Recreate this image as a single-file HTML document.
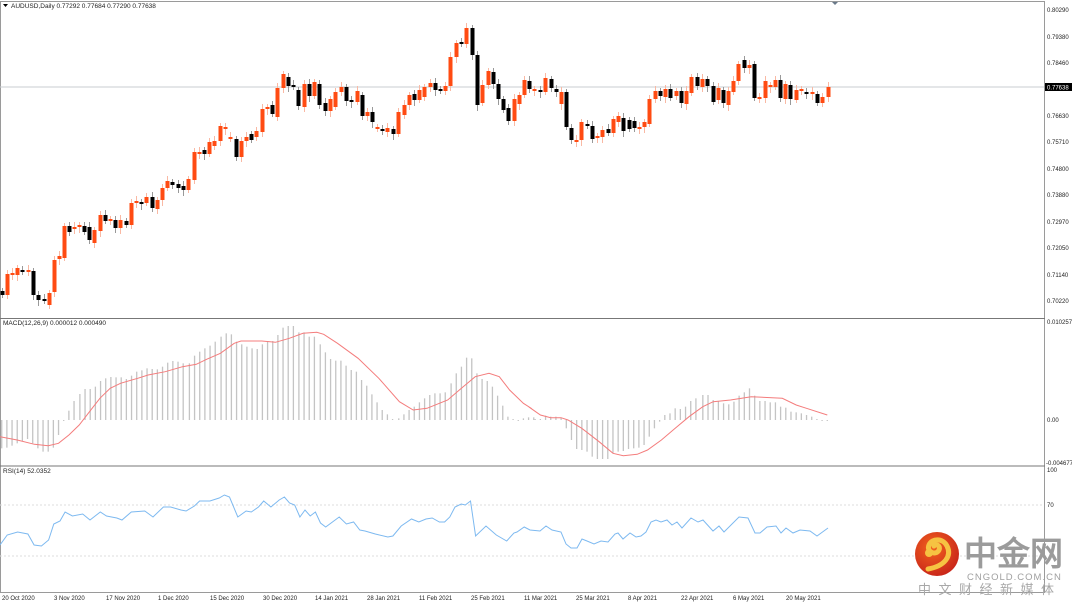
<!DOCTYPE html><html><head><meta charset="utf-8"><style>
html,body{margin:0;padding:0;background:#fff;}
body{width:1072px;height:604px;overflow:hidden;position:relative;font-family:"Liberation Sans",sans-serif;}
svg text{font-family:"Liberation Sans",sans-serif;}
</style></head><body>
<svg id="s" width="1072" height="604" viewBox="0 0 1072 604" xmlns="http://www.w3.org/2000/svg">
<rect x="0" y="0" width="1072" height="604" fill="#fff"/>
<g stroke="#9a9a9a" stroke-width="1" fill="none">
<line x1="0" y1="1.5" x2="1045" y2="1.5"/>
<line x1="0.5" y1="1" x2="0.5" y2="593"/>
<line x1="1044.5" y1="1" x2="1044.5" y2="593"/>
<line x1="0" y1="318.5" x2="1045" y2="318.5" stroke="#777"/>
<line x1="0" y1="466" x2="1045" y2="466" stroke="#777"/>
<line x1="0" y1="592.5" x2="1045" y2="592.5"/>
</g>
<line x1="0" y1="87" x2="1044" y2="87" stroke="#c8ccd2" stroke-width="1"/>
<line x1="0" y1="505" x2="1044" y2="505" stroke="#ddd" stroke-dasharray="2,2"/>
<line x1="0" y1="556" x2="1044" y2="556" stroke="#ddd" stroke-dasharray="2,2"/>
<polygon points="832,2 838,2 835,5" fill="#6a7a8a"/>
<polygon points="3,4 8,4 5.5,7" fill="#000"/>
<text x="11" y="8" font-size="6.5" fill="#222">AUDUSD,Daily  0.77292 0.77684 0.77290 0.77638</text>
<text x="3" y="325" font-size="6.5" fill="#222">MACD(12,26,9) 0.000012 0.000490</text>
<text x="3" y="473" font-size="6.5" fill="#222">RSI(14) 52.0352</text>
<g id="cd"></g>
<g id="mh" stroke="#c4c4c4" stroke-width="1.3"></g>
<polyline id="ms" fill="none" stroke="#f47c7c" stroke-width="1"/>
<polyline id="rs" fill="none" stroke="#7db9f0" stroke-width="1"/>
<g font-size="6" fill="#222">
<text x="1047" y="12">0.80290</text><text x="1047" y="39">0.79380</text><text x="1047" y="65">0.78460</text>
<rect x="1045" y="83" width="27" height="8" fill="#000"/><text x="1047" y="89.5" fill="#fff">0.77638</text>
<text x="1047" y="118">0.76630</text><text x="1047" y="144">0.75710</text><text x="1047" y="171">0.74800</text>
<text x="1047" y="197">0.73880</text><text x="1047" y="224">0.72970</text><text x="1047" y="250">0.72050</text>
<text x="1047" y="277">0.71140</text><text x="1047" y="303">0.70220</text>
<text x="1047" y="324">0.010257</text><text x="1047" y="422">0.00</text><text x="1046" y="465">-0.004677</text>
<text x="1047" y="472">100</text><text x="1047" y="507">70</text>
</g>
<g font-size="6" fill="#222">
<text x="2" y="600">20 Oct 2020</text><text x="54" y="600">3 Nov 2020</text><text x="106" y="600">17 Nov 2020</text>
<text x="158" y="600">1 Dec 2020</text><text x="210" y="600">15 Dec 2020</text><text x="263" y="600">30 Dec 2020</text>
<text x="315" y="600">14 Jan 2021</text><text x="367" y="600">28 Jan 2021</text><text x="419" y="600">11 Feb 2021</text>
<text x="471" y="600">25 Feb 2021</text><text x="524" y="600">11 Mar 2021</text><text x="576" y="600">25 Mar 2021</text>
<text x="628" y="600">8 Apr 2021</text><text x="681" y="600">22 Apr 2021</text><text x="733" y="600">6 May 2021</text>
<text x="786" y="600">20 May 2021</text>
</g>
<defs><radialGradient id="lg" cx="0.4" cy="0.35" r="0.7"><stop offset="0" stop-color="#f2621e"/><stop offset="1" stop-color="#c8241a"/></radialGradient></defs>
<circle cx="937" cy="554" r="22" fill="url(#lg)"/>
<path d="M928 569 C945 566 952 556 947 546 C943 538 932 538 929 545 C926 552 936 556 939 550 C941 546 936 543 934 546" fill="none" stroke="#f6c342" stroke-width="5" stroke-linecap="round"/>
<circle cx="929" cy="553" r="4" fill="#f6c342"/>
<text x="964" y="565" font-size="33" font-weight="bold" fill="#9b9b9b" font-family="Noto Sans CJK SC,sans-serif">中金网</text>
<text x="967" y="580" font-size="9.5" fill="#a0a0a0" letter-spacing="1">CNGOLD.COM.CN</text>
<text x="918" y="594" font-size="13" fill="#a8a8a8" letter-spacing="7.5" font-family="Noto Sans CJK SC,sans-serif">中文财经新媒体</text>
</svg>
<script>
var NS="http://www.w3.org/2000/svg";
function el(p,t,a){var e=document.createElementNS(NS,t);for(var k in a)e.setAttribute(k,a[k]);p.appendChild(e);return e;}
var C="2,291,295,b;7,274,295,o;12,273,275,o;17,268,275,o;22,270,272,b;28,270,272,o;33,271,295,b;38,295,300,b;44,299,301,b;49,293,305,o;54,260,292,o;59,256,259,o;64,226,258,o;69,226,232,b;74,227,229,o;79,225,227,o;84,226,232,b;89,227,240,b;94,230,243,o;100,215,231,o;105,215,221,b;110,219,221,o;115,220,228,b;120,220,228,o;126,221,225,b;131,203,225,o;136,201,203,o;141,202,204,b;146,197,203,o;152,197,208,b;157,200,209,o;162,188,200,o;167,181,188,o;172,182,185,b;178,184,188,b;183,186,190,b;188,179,190,o;194,152,180,o;199,152,154,o;204,150,154,b;209,142,154,o;214,141,146,o;220,126,141,o;225,127,129,o;230,137,139,o;236,139,157,b;241,141,157,o;246,137,141,o;251,134,140,b;256,131,137,o;262,109,132,o;267,107,109,o;272,105,114,b;277,88,117,o;283,74,88,o;288,77,86,b;293,85,87,b;298,90,106,b;304,84,107,o;309,84,96,b;314,82,96,o;319,84,105,b;325,103,111,b;330,99,111,o;335,92,107,o;341,87,92,o;346,87,101,b;351,100,102,b;357,91,102,o;362,95,116,b;367,112,116,o;372,112,122,b;377,127,129,o;382,129,131,b;387,128,132,o;393,129,134,b;398,112,134,o;404,105,115,o;409,95,105,o;414,94,100,b;419,90,100,o;424,87,97,o;430,83,87,o;435,83,90,b;440,89,91,b;445,86,91,o;450,57,86,o;456,43,57,o;461,42,44,b;466,28,44,o;472,28,55,b;477,55,105,b;482,85,103,o;488,71,85,o;493,72,84,b;498,84,99,b;503,99,110,b;508,108,121,b;514,99,121,o;519,95,104,o;524,80,95,o;529,81,89,b;534,89,91,o;540,90,92,b;545,78,92,o;551,79,88,b;556,89,92,b;561,92,104,o;566,92,127,b;571,128,140,b;576,140,142,o;581,122,140,o;587,124,126,b;592,126,139,b;597,136,138,o;602,130,137,o;608,129,133,b;613,119,133,o;618,116,122,o;623,118,131,b;629,120,129,b;634,121,128,b;639,127,129,o;644,122,127,o;649,99,124,o;655,91,99,o;660,91,96,b;665,89,97,o;670,89,98,b;676,91,96,o;681,91,103,b;686,91,104,o;691,77,93,o;697,77,86,b;702,79,87,o;707,79,86,b;713,86,102,b;718,88,100,o;723,90,103,b;728,91,105,o;733,81,92,o;738,64,81,o;744,60,68,b;749,65,68,o;754,64,98,b;759,97,99,o;765,81,98,o;770,85,87,o;775,80,87,o;780,80,98,b;785,84,99,o;790,85,99,b;796,90,100,o;801,89,91,o;806,92,94,b;812,92,94,o;817,94,103,b;822,97,103,o;828,87,97,o".split(";");
var g=document.getElementById("cd");
C.forEach(function(s,i){var a=s.split(","),x=+a[0],t=+a[1],b=+a[2],o=a[3]=="o";
var h=t-3-(i%3),l=b+3+(i%4);
el(g,"line",{x1:x+0.5,x2:x+0.5,y1:h,y2:l,stroke:o?"#f9b9a4":"#999","stroke-width":1});
el(g,"rect",{x:x-1.5,y:t,width:4,height:Math.max(1.2,b-t),fill:o?"#ff4b12":"#000"});});
var H5="5,400;20,398;35,392;50,385;65,378;80,372;95,385;110,400;125,410;140,410;155,398;170,360;185,318;200,287;215,258;232,237;247,222;262,222;277,215;292,198;307,190;322,186;337,187;352,187;367,192;382,182;397,170;412,166;427,160;442,162;457,163;472,155;487,143;502,138;517,140;532,145;550,145;565,122;580,110;595,100;610,92;625,80;642,65;657,55;672,58;687,80;702,88;717,95;732,100;747,102;762,88;777,80;792,78;807,60;822,38;837,33;852,33;868,52;883,52;898,65;913,65;930,88;945,112;960,132;975,137;990,137;1005,152;1020,165;1035,170;1050,195;1065,212;1080,238;1095,262;1110,285;1125,298;1140,317;1158,310;1173,298;1188,285;1203,275;1218,262;1233,250;1248,240;1263,235;1278,235;1293,232;1310,205;1325,175;1340,155;1355,128;1370,130;1385,175;1400,192;1415,198;1430,215;1445,242;1460,272;1475,305;1490,317;1505,318;1520,310;1535,307;1550,307";
var H6="15,312;30,312;45,302;60,305;75,305;90,308;105,340;120,375;135,402;150,405;165,410;180,425;195,432;210,432;225,432;240,415;255,410;270,408;285,402;300,400;315,398;330,390;345,365;360,340;375,320;390,300;405,295;420,280;435,282;450,275;465,258;480,250;500,240;515,240;530,255;545,258;560,265;575,268;590,260;605,242;620,232;635,220;650,242;665,258;680,258;695,262;710,262;725,275;740,278;755,290;770,292;785,295;800,300;815,305;830,312;845,318;860,318";
var mh=document.getElementById("mh");
function bars(str,ox,sx){str.split(";").forEach(function(p){var a=p.split(","),x=ox+a[0]/sx,y=315+a[1]/3;var y0=420;if(Math.abs(y-y0)<1){y=y0-1;}el(mh,"line",{x1:x,x2:x,y1:y0,y2:y});});}
bars(H5,0,2.904);bars(H6,530,2.893);
var S5="0,365;50,375;100,388;140,392;170,385;200,360;230,330;260,290;290,250;320,220;350,205;400,190;430,180;480,170;530,155;570,148;600,133;640,115;680,85;700,78;760,78;800,82;840,70;880,55;920,52;940,58;980,85;1040,130;1100,190;1160,260;1200,285;1240,280;1300,255;1340,220;1380,185;1420,175;1450,185;1480,225;1520,265;1540,278";
var S6="0,278;30,300;60,308;90,308;110,315;150,340;200,380;240,415;270,422;310,418;340,405;380,375;420,340;460,305;500,275;530,260;580,255;640,245;700,248;730,250;770,270;800,280;860,300";
function pts(str,ox,sx,oy){return str.split(";").map(function(p){var a=p.split(",");return (ox+a[0]/sx).toFixed(1)+","+(oy+a[1]/3).toFixed(1);}).join(" ");}
document.getElementById("ms").setAttribute("points",pts(S5,0,2.904,315)+" "+pts(S6,530,2.893,315));
var R1="0,545;7,535;17,532;27,534;33,545;40,546;47,540;52,524;58,521;63,512;70,516;80,514;87,520;97,512;103,516;113,518;118,520;127,512;140,511;148,517;158,507;165,507;175,510;180,511;188,506;193,501;203,501;212,498;217,495;222,497;230,517;238,511;243,512;250,507;255,501;262,507;270,500;275,497;280,503;285,505;290,517;295,510;300,516;305,512;310,523;315,527;328,517;335,524;342,522;348,530;353,531;363,534;375,537;380,536;388,526;398,519;405,522;412,519;418,518;425,522;430,522;435,517;440,507;446,504;450,505;455,501;460,536;470,526;480,535;490,541;497,533;500,532;507,527";
var rp=R1.split(";").map(function(p){var a=p.split(",");return (a[0]*1.034).toFixed(1)+","+a[1];}).join(" ");
rp+=" 530,530 540,531 546,526 552,530 561,532 566,544 571,548 577,548 582,539 587,541 594,544 601,541 608,542 615,534 618,533 623,539 630,533 636,537 641,536 646,532 651,522 656,520 661,522 667,520 672,525 677,522 682,528 691,518 698,522 703,520 713,531 719,526 724,532 739,517 748,518 755,533 760,533 767,527 776,526 781,533 786,528 793,533 800,530 810,531 817,536 828,528";
document.getElementById("rs").setAttribute("points",rp);
</script>
</body></html>
